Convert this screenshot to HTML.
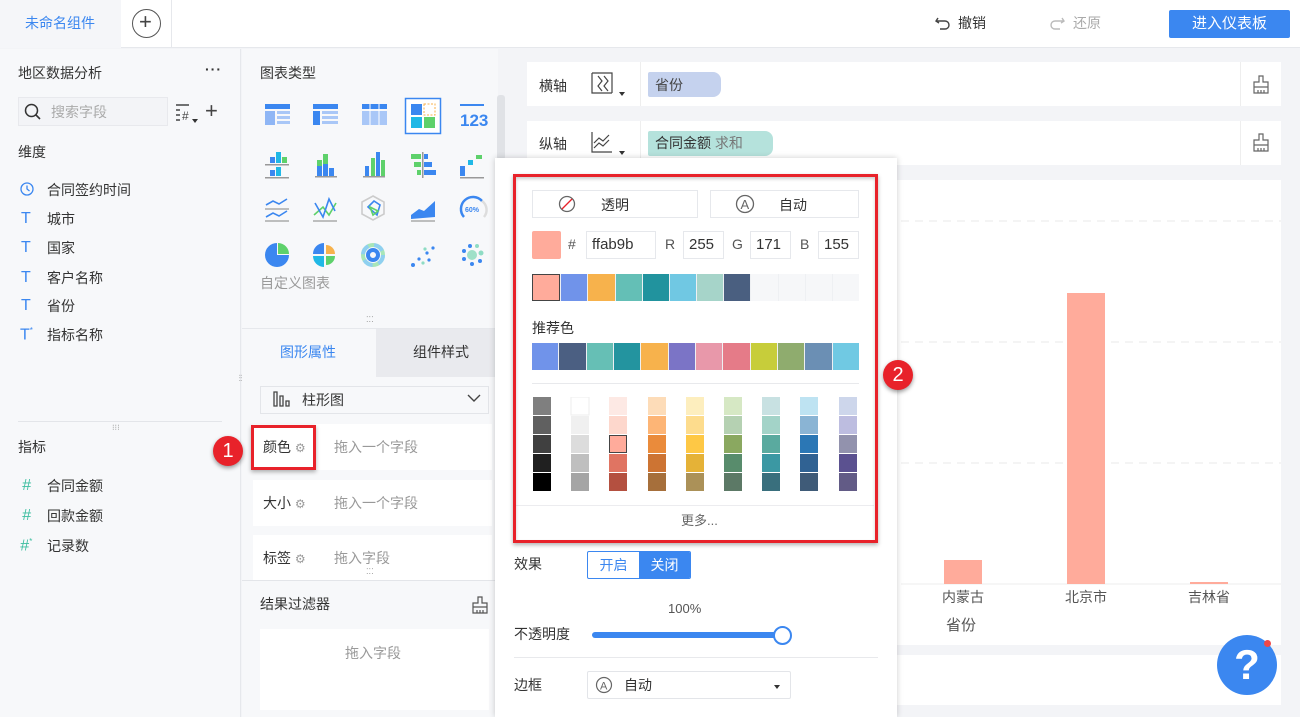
<!DOCTYPE html>
<html style="overflow:hidden;width:1300px;height:717px"><head><meta charset="utf-8">
<style>
*{margin:0;padding:0;box-sizing:border-box}
body{width:1300px;height:717px;overflow:hidden;background:#f3f4f7;font-family:"Liberation Sans","Noto Sans CJK SC",sans-serif;font-size:14px;color:#333;position:relative}
.a{position:absolute}
.t{position:absolute;white-space:nowrap;line-height:1}
.g{color:#999}
</style></head><body>
<!-- top bar -->
<div class="a" style="left:0;top:0;width:1300px;height:48px;background:#fff;border-bottom:1px solid #e6e8ec"></div>
<div class="a" style="left:0;top:0;width:121px;height:48px;background:#f5f6f9"></div>
<div class="t" style="left:25px;top:16px;color:#3b87f0">未命名组件</div>
<div class="a" style="left:121px;top:0;width:51px;height:48px;border-right:1px solid #e6e8ec"></div>
<div class="a" style="left:132px;top:9px;width:29px;height:29px;border:1.5px solid #555;border-radius:50%"></div>
<div class="t" style="left:139px;top:11px;font-size:22px;color:#444">+</div>
<svg class="a" style="left:934px;top:14px" width="18" height="18" viewBox="0 0 18 18"><path d="M4 4 L2 7 L5 9 M2 7 H11 A4 4 0 0 1 11 15 H6" fill="none" stroke="#444" stroke-width="1.4"/></svg>
<div class="t" style="left:958px;top:16px;color:#333">撤销</div>
<svg class="a" style="left:1048px;top:14px" width="18" height="18" viewBox="0 0 18 18"><path d="M14 4 L16 7 L13 9 M16 7 H7 A4 4 0 0 0 7 15 H12" fill="none" stroke="#bbb" stroke-width="1.4"/></svg>
<div class="t" style="left:1073px;top:16px;color:#aaa">还原</div>
<div class="a" style="left:1169px;top:10px;width:121px;height:28px;background:#3b87f0;border-radius:2px;color:#fff;text-align:center;line-height:28px;font-size:15px">进入仪表板</div>

<!-- left panel -->
<div class="a" style="left:0;top:49px;width:241px;height:668px;background:#f7f8fa;border-right:1px solid #e6e8ec"></div>
<div class="t" style="left:18px;top:66px">地区数据分析</div>
<div class="t" style="left:205px;top:62px;font-weight:bold;letter-spacing:1px">···</div>
<div class="a" style="left:18px;top:97px;width:150px;height:29px;background:#f3f4f7;border:1px solid #e8e9ed"></div>
<svg class="a" style="left:24px;top:103px" width="18" height="18"><circle cx="7.5" cy="7.5" r="6" fill="none" stroke="#333" stroke-width="1.5"/><path d="M12 12 L16 16" stroke="#333" stroke-width="1.6"/></svg>
<div class="t g" style="left:51px;top:105px;color:#aaa">搜索字段</div>
<svg class="a" style="left:175px;top:103px" width="28" height="22"><path d="M1 2h13M1 7h4M1 12h4M1 17h4" stroke="#444" stroke-width="1.4"/><text x="7" y="17" font-size="12" fill="#444" font-family="Liberation Sans">#</text><path d="M17 16l3 4 3-4z" fill="#333"/></svg>
<div class="t" style="left:205px;top:100px;font-size:22px;color:#444">+</div>
<div class="t" style="left:18px;top:145px">维度</div>
<svg class="a" style="left:20px;top:182px" width="14" height="14"><circle cx="7" cy="7" r="6" fill="none" stroke="#3b87f0" stroke-width="1.3"/><path d="M7 3.5V7l2.5 2" fill="none" stroke="#3b87f0" stroke-width="1.3"/></svg>
<div class="t" style="left:47px;top:183px">合同签约时间</div>
<div class="t" style="left:21px;top:211px;color:#3b87f0;font-size:16px">T</div><div class="t" style="left:47px;top:212px">城市</div>
<div class="t" style="left:21px;top:240px;color:#3b87f0;font-size:16px">T</div><div class="t" style="left:47px;top:241px">国家</div>
<div class="t" style="left:21px;top:270px;color:#3b87f0;font-size:16px">T</div><div class="t" style="left:47px;top:271px">客户名称</div>
<div class="t" style="left:21px;top:298px;color:#3b87f0;font-size:16px">T</div><div class="t" style="left:47px;top:299px">省份</div>
<div class="t" style="left:20px;top:327px;color:#3b87f0;font-size:16px">T<sup style="font-size:8px">*</sup></div><div class="t" style="left:47px;top:328px">指标名称</div>
<div class="a" style="left:18px;top:421px;width:204px;height:1px;background:#e3e5e9"></div>
<div class="t" style="left:112px;top:424px;font-size:8px;color:#999">⁝⁝⁝</div>
<div class="t" style="left:18px;top:440px">指标</div>
<div class="t" style="left:22px;top:478px;color:#3dbea0;font-size:16px;font-style:italic">#</div><div class="t" style="left:47px;top:479px">合同金额</div>
<div class="t" style="left:22px;top:508px;color:#3dbea0;font-size:16px;font-style:italic">#</div><div class="t" style="left:47px;top:509px">回款金额</div>
<div class="t" style="left:20px;top:538px;color:#3dbea0;font-size:16px;font-style:italic">#<sup style="font-size:8px">*</sup></div><div class="t" style="left:47px;top:539px">记录数</div>
<div class="t" style="left:237px;top:374px;font-size:8px;color:#999;writing-mode:vertical-lr">⁝⁝⁝</div>

<!-- middle panel -->
<div class="a" style="left:242px;top:49px;width:256px;height:668px;background:#f7f8fa"></div>
<div class="a" style="left:497px;top:95px;width:8px;height:65px;background:#e0e2e6;border-radius:3px"></div>
<div class="t" style="left:260px;top:66px">图表类型</div>
<svg class="a" style="left:255px;top:95px" width="240" height="180">
<g transform="translate(10,9)"><rect width="25" height="5" fill="#3b87f0"/><rect y="7" width="10" height="14" fill="#8fb6f5"/><rect x="12" y="7" width="13" height="3" fill="#a9c7f7"/><rect x="12" y="12" width="13" height="3" fill="#a9c7f7"/><rect x="12" y="17" width="13" height="3" fill="#a9c7f7"/></g>
<g transform="translate(58,9)"><rect width="25" height="5" fill="#3b87f0"/><rect y="7" width="7" height="14" fill="#3b87f0"/><rect x="9" y="7" width="16" height="3" fill="#a9c7f7"/><rect x="9" y="12" width="16" height="3" fill="#a9c7f7"/><rect x="9" y="17" width="16" height="3" fill="#a9c7f7"/></g>
<g transform="translate(107,9)"><rect width="25" height="5" fill="#3b87f0"/><rect y="7" width="25" height="14" fill="#a9c7f7"/><path d="M8 0v21M17 0v21" stroke="#fff"/></g>
<rect x="150.5" y="3.5" width="35" height="35" fill="#fff" stroke="#3b87f0" stroke-width="1.5"/>
<g transform="translate(156,9)"><rect width="11" height="11" fill="#3b87f0"/><rect x="13" width="11" height="11" fill="none" stroke="#f7b24c" stroke-dasharray="2 1.5"/><rect y="13" width="11" height="11" fill="#20b8e6"/><rect x="13" y="13" width="11" height="11" fill="#5ed16b"/></g>
<g transform="translate(205,9)"><rect width="24" height="2" fill="#3b87f0"/><text x="0" y="22" font-size="17" fill="#3b87f0" font-family="Liberation Sans Narrow,Liberation Sans" font-weight="bold">123</text></g>
<g transform="translate(10,57)" fill="#3b87f0"><rect x="5" y="5" width="5" height="6"/><rect x="11" y="0" width="5" height="11" fill="#20b8e6"/><rect x="17" y="5" width="5" height="6" fill="#5ed16b"/><rect y="12" width="24" height="1.5" fill="#999"/><rect x="5" y="18" width="5" height="6"/><rect x="11" y="15" width="5" height="9" fill="#20b8e6"/><rect y="25" width="24" height="1.5" fill="#999"/></g>
<g transform="translate(60,57)"><rect x="2" y="8" width="5" height="16" fill="#5ed16b"/><rect x="2" y="14" width="5" height="10" fill="#3b87f0"/><rect x="8" y="2" width="5" height="22" fill="#5ed16b"/><rect x="8" y="12" width="5" height="12" fill="#3b87f0"/><rect x="14" y="16" width="5" height="8" fill="#3b87f0"/><rect y="24" width="22" height="1.5" fill="#999"/></g>
<g transform="translate(108,57)"><rect x="2" y="14" width="4" height="10" fill="#3b87f0"/><rect x="8" y="6" width="4" height="18" fill="#5ed16b"/><rect x="13" y="0" width="4" height="24" fill="#3b87f0"/><rect x="18" y="8" width="4" height="16" fill="#5ed16b"/><rect y="24" width="22" height="1.5" fill="#999"/></g>
<g transform="translate(156,57)"><rect x="0" y="2" width="10" height="5" fill="#5ed16b"/><rect x="3" y="10" width="7" height="5" fill="#5ed16b"/><rect x="6" y="18" width="4" height="5" fill="#5ed16b"/><rect x="11" y="0" width="1.5" height="26" fill="#999"/><rect x="13" y="2" width="4" height="5" fill="#3b87f0"/><rect x="13" y="10" width="8" height="5" fill="#3b87f0"/><rect x="13" y="18" width="12" height="5" fill="#3b87f0"/></g>
<g transform="translate(205,57)"><rect x="0" y="14" width="5" height="10" fill="#3b87f0"/><rect x="8" y="8" width="5" height="5" fill="#20b8e6"/><rect x="16" y="3" width="6" height="4" fill="#5ed16b"/><rect y="25" width="24" height="1.5" fill="#999"/></g>
<g transform="translate(10,102)" fill="none" stroke-width="1.6"><path d="M1 8 L8 4 L14 7 L22 2" stroke="#3b87f0"/><path d="M0 12h24" stroke="#aaa"/><path d="M1 20 L8 16 L14 19 L22 14" stroke="#3b87f0"/><path d="M0 24h24" stroke="#aaa"/></g>
<g transform="translate(58,102)" fill="none" stroke-width="1.6"><path d="M1 18 L10 10 L16 18 L23 6" stroke="#5ed16b"/><path d="M2 6 L10 20 L16 2 L22 14" stroke="#3b87f0"/><path d="M0 24h24" stroke="#aaa"/></g>
<g transform="translate(106,100)" fill="none" stroke-width="1.6"><path d="M12 1 L23 7 L23 19 L12 25 L1 19 L1 7Z" stroke="#ccc"/><path d="M7 12 L13 6 L19 10 L16 20 Z" stroke="#3b87f0"/><path d="M9 12 L17 16 L12 20Z" stroke="#5ed16b"/></g>
<g transform="translate(156,102)"><path d="M0 18 L8 12 L13 14 L24 4 L24 20 L0 22Z" fill="#3b87f0"/><path d="M0 24h24" stroke="#aaa" stroke-width="1.6"/></g>
<g transform="translate(205,100)" fill="none"><path d="M4 22 A11 11 0 0 1 22 6" stroke="#3b87f0" stroke-width="2.5"/><path d="M22 6 A11 11 0 0 1 24 22" stroke="#ddd" stroke-width="2.5"/><text x="5" y="17" font-size="7" fill="#3b87f0" font-weight="bold" font-family="Liberation Sans">60%</text></g>
<g transform="translate(10,148)"><path d="M12 12 V0 A12 12 0 1 0 24 12Z" fill="#3b87f0"/><path d="M13 11 V0 A11 11 0 0 1 24 11Z" fill="#5ed16b"/></g>
<g transform="translate(58,148)"><path d="M11 11V0A11 11 0 0 0 0 11Z" fill="#3b87f0"/><path d="M13 11V2A9 9 0 0 1 22 11Z" fill="#f7b24c"/><path d="M11 13V24A11 11 0 0 1 0 13Z" fill="#20b8e6"/><path d="M13 13H22A9 9 0 0 1 13 22Z" fill="#5ed16b"/></g>
<g transform="translate(106,148)" fill="none"><circle cx="12" cy="12" r="10" stroke="#a8e6b8" stroke-width="4"/><circle cx="12" cy="12" r="5" stroke="#3b87f0" stroke-width="4"/><circle cx="12" cy="12" r="10" stroke="#8fd0f0" stroke-width="4" stroke-dasharray="10 6"/></g>
<g transform="translate(156,148)"><circle cx="2" cy="22" r="2" fill="#3b87f0"/><circle cx="8" cy="16" r="1.6" fill="#3b87f0"/><circle cx="12" cy="20" r="1.6" fill="#8fdcc4"/><circle cx="16" cy="10" r="1.6" fill="#3b87f0"/><circle cx="18" cy="17" r="1.6" fill="#3b87f0"/><circle cx="22" cy="5" r="1.6" fill="#3b87f0"/><circle cx="14" cy="6" r="1.6" fill="#8fdcc4"/></g>
<g transform="translate(205,148)"><circle cx="12" cy="12" r="5" fill="#9fe0c8"/><circle cx="4" cy="8" r="2" fill="#3b87f0"/><circle cx="4" cy="16" r="2" fill="#3b87f0"/><circle cx="10" cy="3" r="2" fill="#3b87f0"/><circle cx="17" cy="3" r="2" fill="#8fdcc4"/><circle cx="21" cy="10" r="2.5" fill="#8fdcc4"/><circle cx="20" cy="18" r="2" fill="#3b87f0"/><circle cx="12" cy="21" r="2" fill="#3b87f0"/></g>
</svg>
<div class="t" style="left:260px;top:276px;color:#999">自定义图表</div>
<div class="t" style="left:366px;top:316px;font-size:8px;color:#999">⁚⁚⁚</div>
<div class="a" style="left:242px;top:328px;width:256px;height:1px;background:#e6e8ec"></div>
<div class="t" style="left:280px;top:345px;color:#3b87f0">图形属性</div>
<div class="a" style="left:376px;top:329px;width:120px;height:48px;background:#e9eaee"></div>
<div class="t" style="left:413px;top:345px">组件样式</div>
<div class="a" style="left:260px;top:386px;width:229px;height:28px;background:#f7f8fa;border:1px solid #e3e5e9"></div>
<svg class="a" style="left:272px;top:390px" width="20" height="18"><path d="M2 2v14h3V2zM8 6v10h3V6zM14 11v5h3v-5z" fill="none" stroke="#444" stroke-width="1.3"/></svg>
<div class="t" style="left:302px;top:393px">柱形图</div>
<svg class="a" style="left:467px;top:393px" width="14" height="10"><path d="M1 2l6 6 6-6" fill="none" stroke="#444" stroke-width="1.4"/></svg>
<div class="a" style="left:253px;top:424px;width:239px;height:46px;background:#fff"></div>
<div class="a" style="left:253px;top:480px;width:239px;height:46px;background:#fff"></div>
<div class="a" style="left:253px;top:535px;width:239px;height:45px;background:#fff"></div>
<div class="a" style="left:251px;top:425px;width:65px;height:45px;border:3px solid #e8222a;box-shadow:0 2px 4px rgba(0,0,0,.3)"></div>
<div class="t" style="left:263px;top:440px">颜色 <span class="g" style="font-size:12px">⚙</span></div>
<div class="t g" style="left:334px;top:440px">拖入一个字段</div>
<div class="t" style="left:263px;top:496px">大小 <span class="g" style="font-size:12px">⚙</span></div>
<div class="t g" style="left:334px;top:496px">拖入一个字段</div>
<div class="t" style="left:263px;top:551px">标签 <span class="g" style="font-size:12px">⚙</span></div>
<div class="t g" style="left:334px;top:551px">拖入字段</div>
<div class="t" style="left:366px;top:568px;font-size:8px;color:#999">⁚⁚⁚</div>
<div class="a" style="left:242px;top:580px;width:256px;height:1px;background:#e3e5e9"></div>
<div class="t" style="left:260px;top:597px">结果过滤器</div>
<svg class="a" style="left:471px;top:596px" width="18" height="18"><path d="M7 1h4v6h5v10H2V7h5z M2 11h14 M6 14v3 M9 14v3 M12 14v3" fill="none" stroke="#555" stroke-width="1.2"/></svg>
<div class="a" style="left:260px;top:629px;width:229px;height:81px;background:#fff"></div>
<div class="t g" style="left:345px;top:646px">拖入字段</div>
<!-- badge 1 -->
<div class="a" style="left:213px;top:436px;width:30px;height:30px;border-radius:50%;background:#e8222a;color:#fff;font-size:20px;text-align:center;line-height:30px;box-shadow:0 2px 4px rgba(0,0,0,.4)">1</div>

<!-- right area -->
<div class="a" style="left:527px;top:62px;width:754px;height:44px;background:#fff"></div>
<div class="t" style="left:539px;top:79px">横轴</div>
<svg class="a" style="left:591px;top:72px" width="40" height="28"><path d="M1 1v20h20M1 1h20v20" fill="none" stroke="#444" stroke-width="1.2"/><path d="M7 4l4 5-4 5 4 5M13 4l4 5-4 5 4 5" fill="none" stroke="#444" stroke-width="1.2"/><path d="M28 20l6 0-3 4z" fill="#333"/></svg>
<div class="a" style="left:640px;top:62px;width:1px;height:44px;background:#eee"></div>
<div class="a" style="left:648px;top:72px;width:73px;height:25px;background:#c5d2ee;border-radius:2px 8px 8px 2px"></div>
<div class="t" style="left:655px;top:78px;color:#444">省份</div>
<div class="a" style="left:1240px;top:62px;width:1px;height:44px;background:#eee"></div>
<svg class="a" style="left:1252px;top:75px" width="18" height="20"><path d="M7 1h4v6h5v11H2V7h5z M2 12h14 M6 15v3 M9 15v3 M12 15v3" fill="none" stroke="#666" stroke-width="1.2"/></svg>
<div class="a" style="left:527px;top:121px;width:754px;height:44px;background:#fff"></div>
<div class="t" style="left:539px;top:137px">纵轴</div>
<svg class="a" style="left:591px;top:131px" width="40" height="28"><path d="M1 1v20h20" fill="none" stroke="#444" stroke-width="1.2"/><path d="M3 12l5-5 4 3 6-6M3 17l5-5 4 3 6-6" fill="none" stroke="#444" stroke-width="1.2"/><path d="M28 20l6 0-3 4z" fill="#333"/></svg>
<div class="a" style="left:640px;top:121px;width:1px;height:44px;background:#eee"></div>
<div class="a" style="left:648px;top:131px;width:125px;height:25px;background:#b5e2dc;border-radius:2px 8px 8px 2px"></div>
<div class="t" style="left:655px;top:136px;color:#333">合同金额 <span style="color:#777">求和</span></div>
<div class="a" style="left:1240px;top:121px;width:1px;height:44px;background:#eee"></div>
<svg class="a" style="left:1252px;top:133px" width="18" height="20"><path d="M7 1h4v6h5v11H2V7h5z M2 12h14 M6 15v3 M9 15v3 M12 15v3" fill="none" stroke="#666" stroke-width="1.2"/></svg>

<div class="a" style="left:527px;top:180px;width:754px;height:465px;background:#fff"></div>
<svg class="a" style="left:895px;top:180px" width="386" height="465">
<path d="M6 41h380M6 162h380M6 283h380" stroke="#eaeaea" stroke-dasharray="8 6"/>
<path d="M6 404h380" stroke="#eee"/>
<rect x="49" y="380" width="38" height="24" fill="#ffab9b"/>
<rect x="172" y="113" width="38" height="291" fill="#ffab9b"/>
<rect x="295" y="402" width="38" height="2" fill="#ffab9b"/>
</svg>
<div class="t" style="left:942px;top:590px;color:#555">内蒙古</div>
<div class="t" style="left:1065px;top:590px;color:#555">北京市</div>
<div class="t" style="left:1188px;top:590px;color:#555">吉林省</div>
<div class="t" style="left:946px;top:618px;color:#555;font-size:15px">省份</div>
<div class="a" style="left:527px;top:655px;width:754px;height:50px;background:#fff"></div>
<div class="a" style="left:1217px;top:635px;width:60px;height:60px;border-radius:50%;background:#3b87f0;color:#fff;font-size:42px;font-weight:bold;text-align:center;line-height:60px">?</div>
<div class="a" style="left:1264px;top:640px;width:7px;height:7px;border-radius:50%;background:#f04848"></div>

<!-- popup -->
<div class="a" style="left:495px;top:158px;width:402px;height:559px;background:#fff;box-shadow:0 0 6px rgba(0,0,0,.2)"></div>
<div class="a" style="left:532px;top:190px;width:166px;height:28px;border:1px solid #e6e8ec"></div>
<svg class="a" style="left:558px;top:195px" width="18" height="18"><circle cx="9" cy="9" r="7.5" fill="none" stroke="#666" stroke-width="1.3"/><path d="M4 14L14 4" stroke="#e8222a" stroke-width="1.3"/></svg>
<div class="t" style="left:601px;top:198px">透明</div>
<div class="a" style="left:710px;top:190px;width:149px;height:28px;border:1px solid #e6e8ec"></div>
<svg class="a" style="left:735px;top:194px" width="20" height="20"><circle cx="10" cy="10" r="8.5" fill="none" stroke="#666" stroke-width="1.3"/><text x="5.5" y="15" font-size="13" fill="#666" font-family="Liberation Sans">A</text></svg>
<div class="t" style="left:779px;top:198px">自动</div>
<div class="a" style="left:532px;top:231px;width:29px;height:28px;background:#ffab9b;border-radius:2px"></div>
<div class="t" style="left:568px;top:237px;color:#555">#</div>
<div class="a" style="left:586px;top:231px;width:70px;height:28px;border:1px solid #e6e8ec"></div><div class="t" style="left:592px;top:237px;font-size:15px">ffab9b</div>
<div class="t" style="left:665px;top:237px;color:#555">R</div>
<div class="a" style="left:683px;top:231px;width:41px;height:28px;border:1px solid #e6e8ec"></div><div class="t" style="left:689px;top:237px;font-size:15px">255</div>
<div class="t" style="left:732px;top:237px;color:#555">G</div>
<div class="a" style="left:750px;top:231px;width:41px;height:28px;border:1px solid #e6e8ec"></div><div class="t" style="left:756px;top:237px;font-size:15px">171</div>
<div class="t" style="left:800px;top:237px;color:#555">B</div>
<div class="a" style="left:818px;top:231px;width:41px;height:28px;border:1px solid #e6e8ec"></div><div class="t" style="left:824px;top:237px;font-size:15px">155</div>
<div class="a" style="left:532px;top:274px;width:327px;height:27px;display:flex;gap:1px;background:#eef0f3">
<div style="flex:1;background:#ffab9b;border:1.5px solid #444"></div><div style="flex:1;background:#7093ea"></div><div style="flex:1;background:#f7b24c"></div><div style="flex:1;background:#64bfb6"></div><div style="flex:1;background:#21939e"></div><div style="flex:1;background:#70c8e3"></div><div style="flex:1;background:#a6d4c9"></div><div style="flex:1;background:#4a5f80"></div><div style="flex:1;background:#f6f7f9"></div><div style="flex:1;background:#f6f7f9"></div><div style="flex:1;background:#f6f7f9"></div><div style="flex:1;background:#f6f7f9"></div></div>
<div class="t" style="left:532px;top:321px">推荐色</div>
<div class="a" style="left:532px;top:343px;width:327px;height:27px;display:flex;gap:1px;background:#eef0f3">
<div style="flex:1;background:#7093ea"></div><div style="flex:1;background:#4b5f82"></div><div style="flex:1;background:#66bfb5"></div><div style="flex:1;background:#23949f"></div><div style="flex:1;background:#f7b24c"></div><div style="flex:1;background:#7b74c6"></div><div style="flex:1;background:#e898aa"></div><div style="flex:1;background:#e57b88"></div><div style="flex:1;background:#c7cd3a"></div><div style="flex:1;background:#8fac6e"></div><div style="flex:1;background:#6b8fb4"></div><div style="flex:1;background:#70c9e3"></div></div>
<div class="a" style="left:532px;top:383px;width:327px;height:1px;background:#e8e9ec"></div>
<svg class="a" style="left:532px;top:397px" width="330" height="96">
<g>
<rect x="1" y="0" width="18" height="18" fill="#7f7f7f"/><rect x="1" y="19" width="18" height="18" fill="#606060"/><rect x="1" y="38" width="18" height="18" fill="#404040"/><rect x="1" y="57" width="18" height="18" fill="#202020"/><rect x="1" y="76" width="18" height="18" fill="#000"/>
<rect x="39" y="0" width="18" height="18" fill="#fff" stroke="#eee"/><rect x="39" y="19" width="18" height="18" fill="#f0f0f0"/><rect x="39" y="38" width="18" height="18" fill="#dcdcdc"/><rect x="39" y="57" width="18" height="18" fill="#bfbfbf"/><rect x="39" y="76" width="18" height="18" fill="#a5a5a5"/>
<rect x="77" y="0" width="18" height="18" fill="#fde9e4"/><rect x="77" y="19" width="18" height="18" fill="#fdd7cc"/><rect x="77.5" y="38.5" width="17" height="17" fill="#ffab9b" stroke="#444"/><rect x="77" y="57" width="18" height="18" fill="#e07462"/><rect x="77" y="76" width="18" height="18" fill="#b45040"/>
<rect x="116" y="0" width="18" height="18" fill="#fddcb8"/><rect x="116" y="19" width="18" height="18" fill="#fdb576"/><rect x="116" y="38" width="18" height="18" fill="#ea8b3b"/><rect x="116" y="57" width="18" height="18" fill="#cd7433"/><rect x="116" y="76" width="18" height="18" fill="#a66f3b"/>
<rect x="154" y="0" width="18" height="18" fill="#fdeebe"/><rect x="154" y="19" width="18" height="18" fill="#fddc8d"/><rect x="154" y="38" width="18" height="18" fill="#fec845"/><rect x="154" y="57" width="18" height="18" fill="#e5b237"/><rect x="154" y="76" width="18" height="18" fill="#ab9158"/>
<rect x="192" y="0" width="18" height="18" fill="#d6e8c4"/><rect x="192" y="19" width="18" height="18" fill="#b5d1b2"/><rect x="192" y="38" width="18" height="18" fill="#8aa860"/><rect x="192" y="57" width="18" height="18" fill="#588c6c"/><rect x="192" y="76" width="18" height="18" fill="#5c7966"/>
<rect x="230" y="0" width="18" height="18" fill="#c8e1e2"/><rect x="230" y="19" width="18" height="18" fill="#a3d3c8"/><rect x="230" y="38" width="18" height="18" fill="#5aaa9f"/><rect x="230" y="57" width="18" height="18" fill="#3b98a3"/><rect x="230" y="76" width="18" height="18" fill="#396f7d"/>
<rect x="268" y="0" width="18" height="18" fill="#bee3f2"/><rect x="268" y="19" width="18" height="18" fill="#8ab4d4"/><rect x="268" y="38" width="18" height="18" fill="#2b77b5"/><rect x="268" y="57" width="18" height="18" fill="#306293"/><rect x="268" y="76" width="18" height="18" fill="#3f5b78"/>
<rect x="307" y="0" width="18" height="18" fill="#cdd6eb"/><rect x="307" y="19" width="18" height="18" fill="#bdbde0"/><rect x="307" y="38" width="18" height="18" fill="#9292ad"/><rect x="307" y="57" width="18" height="18" fill="#5b5190"/><rect x="307" y="76" width="18" height="18" fill="#625b86"/>
</g></svg>
<div class="a" style="left:516px;top:505px;width:358px;height:1px;background:#ececef"></div>
<div class="t" style="left:681px;top:514px;color:#666;font-size:13px">更多...</div>
<div class="a" style="left:513px;top:174px;width:365px;height:369px;border:3px solid #e8222a;box-shadow:0 2px 4px rgba(0,0,0,.3),inset 0 2px 3px rgba(0,0,0,.2)"></div>
<div class="t" style="left:514px;top:557px">效果</div>
<div class="a" style="left:587px;top:551px;width:104px;height:28px;border:1px solid #3b87f0;border-radius:2px;overflow:hidden;display:flex"><div style="flex:1;color:#3b87f0;text-align:center;line-height:26px">开启</div><div style="flex:1;background:#3b87f0;color:#fff;text-align:center;line-height:26px">关闭</div></div>
<div class="t" style="left:668px;top:602px;color:#555;font-size:13px">100%</div>
<div class="t" style="left:514px;top:627px">不透明度</div>
<div class="a" style="left:592px;top:632px;width:190px;height:6px;background:#3b87f0;border-radius:3px"></div>
<div class="a" style="left:773px;top:626px;width:19px;height:19px;background:#fff;border:2px solid #3b87f0;border-radius:50%"></div>
<div class="a" style="left:514px;top:657px;width:364px;height:1px;background:#e8e9ec"></div>
<div class="t" style="left:514px;top:678px">边框</div>
<div class="a" style="left:587px;top:671px;width:204px;height:28px;border:1px solid #e3e5e9;border-radius:2px"></div>
<svg class="a" style="left:595px;top:676px" width="18" height="18"><circle cx="9" cy="9" r="7.5" fill="none" stroke="#666" stroke-width="1.2"/><text x="5" y="13.5" font-size="11" fill="#666" font-family="Liberation Sans">A</text></svg>
<div class="t" style="left:624px;top:678px">自动</div>
<svg class="a" style="left:774px;top:685px" width="6" height="4"><path d="M0 0h6L3 4z" fill="#333"/></svg>
<!-- badge 2 -->
<div class="a" style="left:883px;top:360px;width:30px;height:30px;border-radius:50%;background:#e8222a;color:#fff;font-size:20px;text-align:center;line-height:30px;box-shadow:0 2px 4px rgba(0,0,0,.4)">2</div>
</body></html>
